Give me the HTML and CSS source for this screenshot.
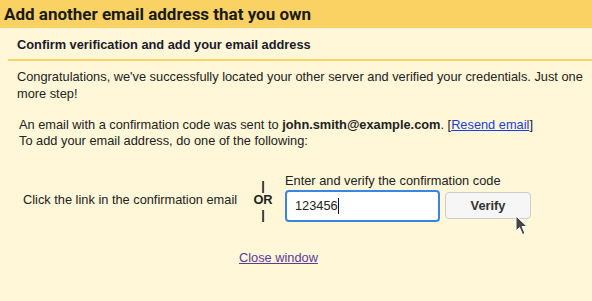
FILE: index.html
```html
<!DOCTYPE html>
<html>
<head>
<meta charset="utf-8">
<link rel="stylesheet" href="styles.css">
</head>
<body>
<div class="header"><h1 class="title">Add another email address that you own</h1></div>
<div class="content">
  <h2 class="subtitle">Confirm verification and add your email address</h2>
  <div class="rule"></div>
  <p class="intro">Congratulations, we've successfully located your other server and verified your credentials. Just one more step!</p>
  <p class="sent">An email with a confirmation code was sent to <b>john.smith@example.com</b>. [<a class="resend" href="#">Resend email</a>]<br>To add your email address, do one of the following:</p>
  <div class="choice">
    <div class="opt-left">Click the link in the confirmation email</div>
    <div class="or"><span class="bar">|</span><b>OR</b><span class="bar">|</span></div>
    <div class="opt-right">
      <div class="label">Enter and verify the confirmation code</div>
      <div class="controls">
        <div class="input">123456<span class="caret"></span></div>
        <button class="verify">Verify</button>
      </div>
    </div>
  </div>
  <div class="close"><a class="close-link" href="#">Close window</a></div>
</div>
<svg class="pointer" width="14" height="21" viewBox="0 0 14 21"><path d="M1 1 L1 16 L4.5 12.5 L7.5 19.5 L10 18.5 L7 11.5 L12 11.5 Z" fill="#444" stroke="#fff" stroke-width="1"/></svg>
</body>
</html>
```
FILE: styles.css
```css
html, body { margin: 0; padding: 0; }
body {
  background: #fff7d7;
  font-family: "Liberation Sans", Arial, sans-serif;
  font-size: 12.8px;
  color: #222;
  height: 301px;
  position: relative;
  overflow: hidden;
}
.header {
  background: #fad163;
  height: 28px;
  display: flex;
  align-items: center;
  padding-left: 4px;
}
.title {
  margin: 0;
  font-family: Roboto, "Liberation Sans", sans-serif;
  font-size: 17px;
  font-weight: bold;
  color: #1a1a1a;
}
.content { padding-left: 8px; }
.subtitle {
  margin: 0;
  padding: 9px 0 0 9px;
  height: 22px;
  font-size: 12.8px;
  font-weight: bold;
  color: #1a1a2a;
}
.rule { height: 2px; background: #fad163; margin-top: 0; }
.intro {
  margin: 7px 0 0 9px;
  line-height: 17px;
}
.sent {
  margin: 15px 0 0 11px;
  line-height: 16px;
}
.resend { color: #1a3edb; }
.choice {
  display: flex;
  align-items: center;
  margin-top: 23px;
  margin-left: 15px;
}
.opt-left { width: 230px; padding-top: 4px; }
.or {
  display: flex;
  flex-direction: column;
  align-items: center;
  width: 20px;
  line-height: 14px;
  margin-right: 12px;
  padding-top: 6px;
}
.bar { font-weight: bold; line-height: 15px; }
.label { line-height: 15px; }
.controls { display: flex; align-items: center; gap: 5px; margin-top: 2px; }
.input {
  width: 143px;
  height: 28px;
  border: 2px solid #3a85e0;
  border-radius: 4px;
  background: #fff;
  display: flex;
  align-items: center;
  padding-left: 8px;
  color: #222;
}
.caret { display: inline-block; width: 1px; height: 16px; background: #111; }
.verify {
  width: 86px;
  height: 27px;
  border: 1px solid #ccc;
  border-radius: 4px;
  background: #f6f6f6;
  font-family: "Liberation Sans", Arial, sans-serif;
  font-size: 12.8px;
  font-weight: bold;
  color: #333;
}
.close { margin-top: 28px; padding-left: 231px; }
.close-link { color: #5b3a9c; }
.pointer { position: absolute; left: 515px; top: 215px; }
```
